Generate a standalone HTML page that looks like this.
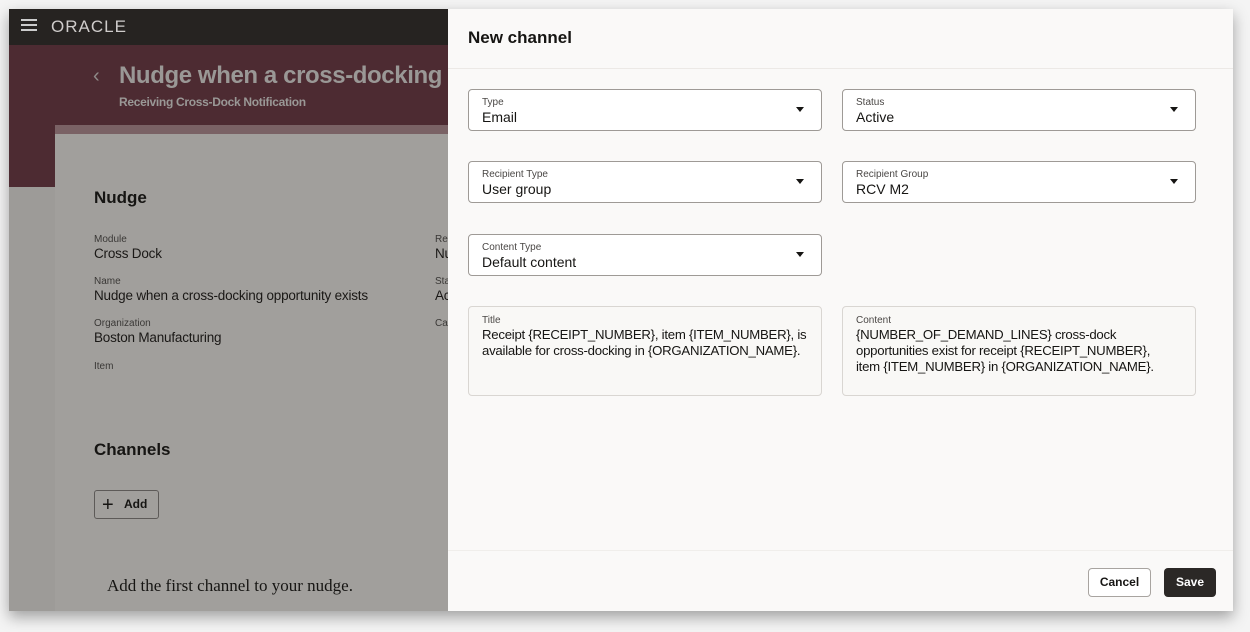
<!DOCTYPE html>
<html><head><style>
*{box-sizing:border-box;margin:0;padding:0}
body{width:1250px;height:632px;background:#f4f4f4;font-family:"Liberation Sans",sans-serif;position:relative;overflow:hidden}
.frame{position:absolute;left:9px;top:9px;width:1224px;height:602px;background:#9d9b98;box-shadow:0 6px 14px rgba(0,0,0,.35);overflow:hidden}
.hdr{position:absolute;left:0;top:0;width:440px;height:36px;background:#262321}
.band{position:absolute;left:0;top:36px;width:440px;height:142px;background:#4d2b32}
.card{position:absolute;left:46px;top:125px;width:394px;height:480px;background:#a19f9c}
.strip{position:absolute;left:46px;top:116px;width:394px;height:10px;background:#7a6265}
.abs{position:absolute;white-space:nowrap}
.lbl{font-size:10px;color:#3a3836}
.val{font-size:13.5px;color:#1a1816;letter-spacing:-0.2px}
.drawer{position:absolute;left:439px;top:0;width:785px;height:602px;background:#faf9f8}
.fld{position:absolute;width:354px;height:42px;background:#fff;border:1px solid #9e9a96;border-radius:4px}
.fld .l{position:absolute;left:13px;top:7px;font-size:10px;color:#4a4745}
.fld .v{position:absolute;left:13px;top:19px;font-size:14px;color:#161513}
.fld .c{position:absolute;right:17px;top:17px;width:0;height:0;border-left:4.5px solid transparent;border-right:4.5px solid transparent;border-top:5px solid #161513}
.ta{position:absolute;width:354px;height:90px;background:#f9f8f6;border:1px solid #d9d6d2;border-radius:4px}
.ta .l{position:absolute;left:13px;top:8px;font-size:10px;color:#4a4745}
.ta .v{position:absolute;left:13px;top:20px;font-size:13.2px;line-height:16px;color:#161513;width:340px;letter-spacing:-0.25px}
</style></head><body>
<div class="frame">
<div class="hdr"></div>
<div style="position:absolute;left:12px;top:10px;width:16px;height:2px;background:#ccc;box-shadow:0 5px 0 #ccc,0 10px 0 #ccc"></div>
<div class="abs" style="left:42px;top:8px;font-size:17px;color:#cfcccb;letter-spacing:1px">ORACLE</div>
<div class="band"></div>
<div class="abs" style="left:84px;top:56px;font-size:20px;color:#8f8a88">&lsaquo;</div>
<div class="abs" style="left:110px;top:53px;font-size:24px;font-weight:bold;color:#9a9896;letter-spacing:-0.4px">Nudge when a cross-docking o</div>
<div class="abs" style="left:110px;top:86px;font-size:12px;font-weight:bold;color:#9a9896;letter-spacing:-0.3px">Receiving Cross-Dock Notification</div>
<div class="strip"></div>
<div class="card"></div>
<div class="abs" style="left:85px;top:179px;font-size:17px;font-weight:bold;color:#161513">Nudge</div>
<div class="abs lbl" style="left:85px;top:225px">Module</div>
<div class="abs val" style="left:85px;top:237px">Cross Dock</div>
<div class="abs lbl" style="left:85px;top:267px">Name</div>
<div class="abs val" style="left:85px;top:279px">Nudge when a cross-docking opportunity exists</div>
<div class="abs lbl" style="left:85px;top:309px">Organization</div>
<div class="abs val" style="left:85px;top:321px">Boston Manufacturing</div>
<div class="abs lbl" style="left:85px;top:352px">Item</div>
<div class="abs lbl" style="left:426px;top:225px">Re</div>
<div class="abs val" style="left:426px;top:237px">Nu</div>
<div class="abs lbl" style="left:426px;top:267px">Sta</div>
<div class="abs val" style="left:426px;top:279px">Ac</div>
<div class="abs lbl" style="left:426px;top:309px">Ca</div>
<div class="abs" style="left:85px;top:431px;font-size:17px;font-weight:bold;color:#161513">Channels</div>
<div class="abs" style="left:85px;top:481px;width:65px;height:29px;border:1px solid #5d5a58;border-radius:3px"></div>
<div class="abs" style="left:93px;top:485px;font-size:20px;color:#161513">+</div>
<div class="abs" style="left:115px;top:488px;font-size:12px;font-weight:bold;color:#161513">Add</div>
<div class="abs" style="left:98px;top:567px;font-size:17px;font-family:'Liberation Serif',serif;color:#161513">Add the first channel to your nudge.</div>

<div class="drawer">
<div class="abs" style="left:20px;top:19px;font-size:17px;font-weight:bold;color:#161513">New channel</div>
<div style="position:absolute;left:0;top:59px;width:785px;height:1px;background:#ece9e6"></div>
<div class="fld" style="left:20px;top:80px"><div class="l">Type</div><div class="v">Email</div><div class="c"></div></div>
<div class="fld" style="left:394px;top:80px"><div class="l">Status</div><div class="v">Active</div><div class="c"></div></div>
<div class="fld" style="left:20px;top:152px"><div class="l">Recipient Type</div><div class="v">User group</div><div class="c"></div></div>
<div class="fld" style="left:394px;top:152px"><div class="l">Recipient Group</div><div class="v">RCV M2</div><div class="c"></div></div>
<div class="fld" style="left:20px;top:225px"><div class="l">Content Type</div><div class="v">Default content</div><div class="c"></div></div>
<div class="ta" style="left:20px;top:297px"><div class="l">Title</div><div class="v">Receipt {RECEIPT_NUMBER}, item {ITEM_NUMBER}, is<br>available for cross-docking in {ORGANIZATION_NAME}.</div></div>
<div class="ta" style="left:394px;top:297px"><div class="l">Content</div><div class="v">{NUMBER_OF_DEMAND_LINES} cross-dock<br>opportunities exist for receipt {RECEIPT_NUMBER},<br>item {ITEM_NUMBER} in {ORGANIZATION_NAME}.</div></div>
<div style="position:absolute;left:0;top:541px;width:785px;height:1px;background:#f0eeeb"></div>
<div class="abs" style="left:640px;top:559px;width:63px;height:29px;border:1px solid #a8a4a0;border-radius:4px;background:#fff;font-size:12px;font-weight:bold;color:#161513;text-align:center;line-height:27px">Cancel</div>
<div class="abs" style="left:716px;top:559px;width:52px;height:29px;border-radius:4px;background:#2b2826;font-size:12px;font-weight:bold;color:#fff;text-align:center;line-height:29px">Save</div>
</div>
</div>
</body></html>
